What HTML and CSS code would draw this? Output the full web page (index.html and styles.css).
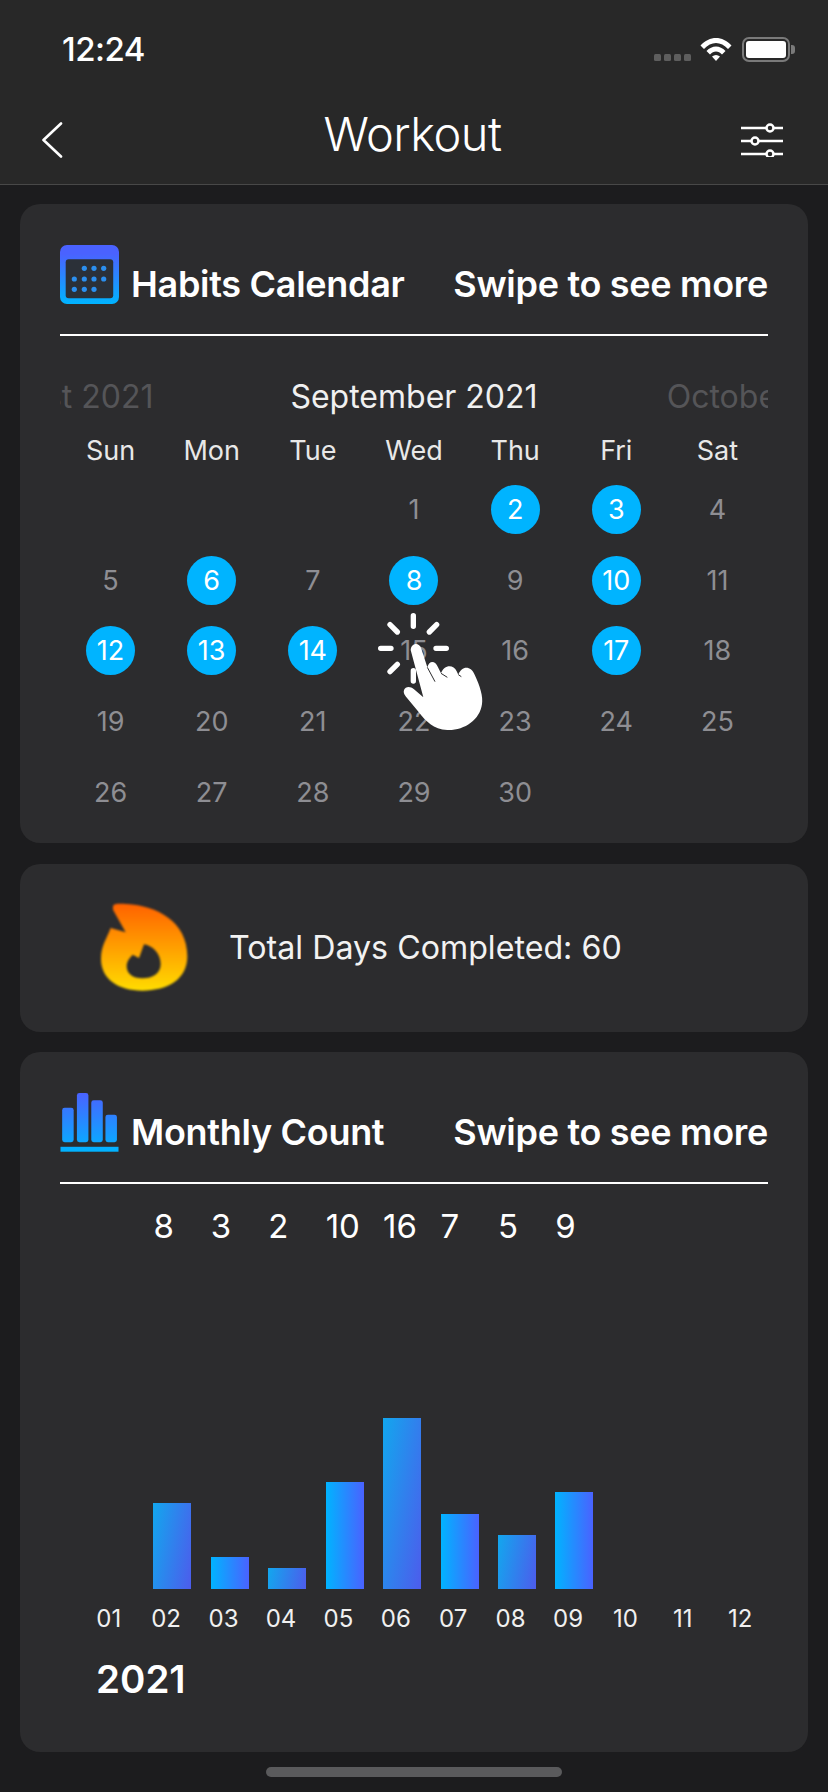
FILE: index.html
```html
<!DOCTYPE html>
<html lang="en">
<head>
<meta charset="utf-8">
<title>Workout</title>
<link rel="stylesheet" href="styles.css">
</head>
<body>
<header class="top">
  <div class="status">
    <span class="time">12:24</span>
    <div class="status-icons">
      <div class="signal"><i></i><i></i><i></i><i></i></div>
      <svg class="wifi" viewBox="0 0 32 24"><path d="M0.5 8.5C9.5 -1.5 22.5 -1.5 31.5 8.5L28 12C21 4 11 4 4 12Z" fill="#fff"/><path d="M6.5 14C12 8 20 8 25.5 14L22 17.5C18.5 13.5 13.5 13.5 10 17.5Z" fill="#fff"/><path d="M12 19.5C14.5 17.5 17.5 17.5 20 19.5L16 24Z" fill="#fff"/></svg>
      <div class="battery"><div class="battery-body"><div class="battery-fill"></div></div><div class="battery-cap"></div></div>
    </div>
  </div>
  <nav class="nav">
    <svg class="back" viewBox="0 0 22 36"><path d="M20 1.5L2.5 18L20 34.500" fill="none" stroke="#fff" stroke-width="2.600" stroke-linecap="round" stroke-linejoin="round"/></svg>
    <h1 class="title">Workout</h1>
    <svg class="sliders" viewBox="0 0 44 34"><g stroke="#fff" stroke-width="2.500" fill="none"><path d="M1 5H43M1 18H43M1 31H43"/><circle cx="30" cy="5" r="3.500" fill="#282828"/><circle cx="15" cy="18" r="3.500" fill="#282828"/><circle cx="30" cy="31" r="3.500" fill="#282828"/></g></svg>
  </nav>
</header>

<main class="content">
  <section class="card calendar-card">
    <div class="card-head">
      <svg class="head-icon" viewBox="0 0 59 59">
        <defs><linearGradient id="g1" x1="0" y1="0" x2="0" y2="1"><stop offset="0.15" stop-color="#4a62ff"/><stop offset="1" stop-color="#00b4ff"/></linearGradient></defs>
        <rect x="0" y="0" width="59" height="59" rx="7" fill="url(#g1)"/>
        <rect x="5.700" y="14.300" width="47.500" height="39" rx="3" fill="#2b3038"/>
        <g fill="#2b8ff0"><circle cx="24.300" cy="23.300" r="2.600"/><circle cx="34" cy="23.300" r="2.600"/><circle cx="43.700" cy="23.300" r="2.600"/><circle cx="14.300" cy="34" r="2.600"/><circle cx="24.300" cy="34" r="2.600"/><circle cx="34" cy="34" r="2.600"/><circle cx="43.700" cy="34" r="2.600"/><circle cx="14.300" cy="44.300" r="2.600"/><circle cx="24.300" cy="44.300" r="2.600"/><circle cx="34" cy="44.300" r="2.600"/></g>
      </svg>
      <h2 class="head-title">Habits Calendar</h2>
      <span class="head-hint">Swipe to see more</span>
    </div>
    <div class="months">
      <span class="month month-prev">August 2021</span>
      <span class="month month-current">September 2021</span>
      <span class="month month-next">October 2021</span>
    </div>
    <div class="weekdays"><span>Sun</span><span>Mon</span><span>Tue</span><span>Wed</span><span>Thu</span><span>Fri</span><span>Sat</span></div>
    <div class="days">
      <span></span><span></span><span></span>
      <span class="day">1</span><span class="day on">2</span><span class="day on">3</span><span class="day">4</span>
      <span class="day">5</span><span class="day on">6</span><span class="day">7</span><span class="day on">8</span><span class="day">9</span><span class="day on">10</span><span class="day">11</span>
      <span class="day on">12</span><span class="day on">13</span><span class="day on">14</span><span class="day">15</span><span class="day">16</span><span class="day on">17</span><span class="day">18</span>
      <span class="day">19</span><span class="day">20</span><span class="day">21</span><span class="day">22</span><span class="day">23</span><span class="day">24</span><span class="day">25</span>
      <span class="day">26</span><span class="day">27</span><span class="day">28</span><span class="day">29</span><span class="day">30</span>
    </div>
    <svg class="hand" viewBox="0 0 540 480">
      <g stroke="#fff" stroke-width="16" stroke-linecap="round" fill="none">
        <path d="M220 107V139M150 134L172 156M290 134L268 156M122 205H153M288 205H319M172 253L150 275M220 272V303"/>
      </g>
      <path d="M212 210C214 188 238 186 244 206L262 262C268 240 286 242 294 262L303 280C312 254 340 252 350 274L355 284C366 254 394 258 404 284C420 318 430 350 426 372C420 420 372 452 322 450C280 448 258 424 236 396L198 350C180 330 202 310 222 328L250 352Z" fill="#fff"/>
      <path d="M262 262L285 305M303 280L322 292M355 284L364 290" stroke="#2c2c2e" stroke-width="3" fill="none"/>
    </svg>
  </section>

  <section class="card total-card">
    <svg class="flame" viewBox="0 0 270 270">
      <defs><linearGradient id="g2" x1="0" y1="0" x2="0" y2="1"><stop offset="0" stop-color="#ff6200"/><stop offset="1" stop-color="#ffdc00"/></linearGradient></defs>
      <path class="flame-shape" fill="url(#g2)" fill-rule="evenodd" d="M39 8C44 0 70 3 80 3C170 8 262 55 262 160C262 228 205 263 127 263C55 263 3 228 3 168C3 128 20 108 32 75L77 88L39 20ZM132 124C158 128 182 152 182 183C182 212 158 226 127 226C98 226 80 212 80 190C80 172 92 162 98 155L117 165Z"/>
    </svg>
    <span class="total-text">Total Days Completed: 60</span>
  </section>

  <section class="card chart-card">
    <div class="card-head">
      <svg class="head-icon" viewBox="0 0 59 60">
        <defs><linearGradient id="g3" gradientUnits="userSpaceOnUse" x1="0" y1="0" x2="0" y2="60"><stop offset="0" stop-color="#4a62ff"/><stop offset="1" stop-color="#00b4ff"/></linearGradient></defs>
        <g fill="url(#g3)"><rect x="1.700" y="15" width="11.700" height="35" rx="2.500"/><rect x="16.700" y="0" width="11.700" height="50" rx="2.500"/><rect x="31.300" y="7.300" width="11.700" height="42.700" rx="2.500"/><rect x="45.700" y="22" width="11.700" height="28" rx="2.500"/><rect x="0" y="54.700" width="59" height="5"/></g>
      </svg>
      <h2 class="head-title">Monthly Count</h2>
      <span class="head-hint">Swipe to see more</span>
    </div>
    <div class="chart">
      <div class="col"><span class="val"></span><div class="plot"></div><span class="mon">01</span></div>
      <div class="col"><span class="val">8</span><div class="plot"><div class="bar dim" style="height:86px"></div></div><span class="mon">02</span></div>
      <div class="col"><span class="val">3</span><div class="plot"><div class="bar" style="height:32px"></div></div><span class="mon">03</span></div>
      <div class="col"><span class="val">2</span><div class="plot"><div class="bar dim" style="height:21px"></div></div><span class="mon">04</span></div>
      <div class="col"><span class="val">10</span><div class="plot"><div class="bar" style="height:107px"></div></div><span class="mon">05</span></div>
      <div class="col"><span class="val">16</span><div class="plot"><div class="bar dim" style="height:171px"></div></div><span class="mon">06</span></div>
      <div class="col"><span class="val">7</span><div class="plot"><div class="bar" style="height:75px"></div></div><span class="mon">07</span></div>
      <div class="col"><span class="val">5</span><div class="plot"><div class="bar dim" style="height:54px"></div></div><span class="mon">08</span></div>
      <div class="col"><span class="val">9</span><div class="plot"><div class="bar" style="height:97px"></div></div><span class="mon">09</span></div>
      <div class="col"><span class="val"></span><div class="plot"></div><span class="mon">10</span></div>
      <div class="col"><span class="val"></span><div class="plot"></div><span class="mon">11</span></div>
      <div class="col"><span class="val"></span><div class="plot"></div><span class="mon">12</span></div>
    </div>
    <div class="year">2021</div>
  </section>
</main>
<div class="home-bar"></div>
</body>
</html>
```
FILE: styles.css
```css
* { box-sizing: border-box; }
html, body { margin: 0; padding: 0; }
body {
  width: 828px;
  height: 1792px;
  overflow: hidden;
  background: #1c1c1e;
  color: #fff;
  font-family: Inter, "Liberation Sans", sans-serif;
}
.top {
  height: 185px;
  background: #282828;
  border-bottom: 1px solid #484848;
}
.status {
  height: 100px;
  padding: 29px 33px 0 62px;
  display: flex;
  justify-content: space-between;
  align-items: flex-start;
}
.time { font-size: 33px; line-height: 40px; font-weight: 500; letter-spacing: -0.5px; }
.status-icons { display: flex; align-items: flex-start; padding-top: 8px; }
.signal { display: flex; gap: 3px; margin-top: 17px; margin-right: 9px; }
.signal i { width: 7px; height: 7px; border-radius: 1.5px; background: #5e5e5e; }
.wifi { width: 32px; height: 24px; margin-right: 10px; }
.battery { display: flex; align-items: center; }
.battery-body { width: 48px; height: 25px; border: 2px solid #7a7a7a; border-radius: 7px; padding: 2px; }
.battery-fill { width: 100%; height: 100%; background: #fff; border-radius: 3px; }
.battery-cap { width: 4px; height: 9px; background: #7a7a7a; border-radius: 0 3px 3px 0; margin-left: 1px; }
.nav {
  height: 84px;
  padding: 0 44px 0 41px;
  display: grid;
  grid-template-columns: 1fr auto 1fr;
  align-items: center;
}
.back { width: 22px; height: 36px; margin-top: -4px; }
.title { margin: -16px 0 0; font-size: 47px; line-height: 56px; font-weight: 300; letter-spacing: -0.5px; }
.sliders { width: 44px; height: 34px; margin-top: -4px; justify-self: end; }
.content {
  padding: 19px 20px 0;
  display: flex;
  flex-direction: column;
  gap: 20.5px;
}
.card { background: #2c2c2e; border-radius: 20px; padding: 0 40px; position: relative; }
.calendar-card { height: 639px; }
.total-card { height: 168px; display: flex; align-items: center; padding: 0 0 0 80px; }
.chart-card { height: 700px; }
.card-head {
  height: 132px;
  padding: 41px 0 30px;
  border-bottom: 2px solid #fff;
  display: flex;
  align-items: flex-end;
}
.head-icon { width: 59px; height: 59px; flex: none; }
.head-title { margin: 0 0 0 12px; font-size: 36px; line-height: 40px; font-weight: 600; letter-spacing: -0.3px; flex: 1; white-space: nowrap; }
.head-hint { font-size: 36px; line-height: 40px; font-weight: 600; letter-spacing: -0.3px; white-space: nowrap; }
.months {
  display: flex;
  justify-content: center;
  overflow: hidden;
  height: 40px;
  margin-top: 41px;
}
.month { flex: 0 0 350px; text-align: center; font-size: 32px; line-height: 40px; color: #555558; white-space: nowrap; }
.month-prev { padding-right: 9px; }
.month-next { padding-left: 9px; }
.month-current { color: #f0f0f0; }
.weekdays {
  display: grid;
  grid-template-columns: repeat(7, 1fr);
  margin-top: 14px;
  font-size: 27px;
  line-height: 40px;
  color: #e8e8e8;
  text-align: center;
}
.days {
  display: grid;
  grid-template-columns: repeat(7, 1fr);
  grid-auto-rows: 70.8px;
  margin-top: 3px;
  justify-items: center;
  align-items: center;
}
.day {
  width: 49px;
  height: 49px;
  border-radius: 50%;
  display: flex;
  align-items: center;
  justify-content: center;
  font-size: 27px;
  color: #8e8e93;
}
.day.on { background: #00b4ff; color: #fff; }
.hand { position: absolute; left: 320px; top: 376px; width: 180px; height: 160px; }
.flame { width: 90px; height: 90px; flex: none; filter: blur(1px); }
.total-text { margin-left: 39px; font-size: 32.2px; line-height: 40px; color: #f2f2f2; }
.chart { display: grid; grid-template-columns: repeat(12, 1fr); margin: 0 -1px 0 20px; }
.col { display: flex; flex-direction: column; }
.val { height: 40px; margin-top: 22px; padding-left: 16px; font-size: 33px; line-height: 40px; white-space: nowrap; }
.plot { height: 343px; display: flex; align-items: flex-end; padding-left: 16px; }
.bar { width: 38px; background: linear-gradient(90deg, #00b4ff, #4a62ff); }
.bar.dim { background: linear-gradient(100deg, #12a7ee, #4d5cec); }
.mon { margin-top: 15px; font-size: 24px; line-height: 30px; text-align: center; color: #f0f0f0; }
.year { margin-top: 23px; margin-left: 36px; font-size: 38.5px; line-height: 44px; font-weight: 600; }
.home-bar { width: 296px; height: 10px; margin: 14.5px auto 0; border-radius: 5px; background: #5a5a5c; }
```
